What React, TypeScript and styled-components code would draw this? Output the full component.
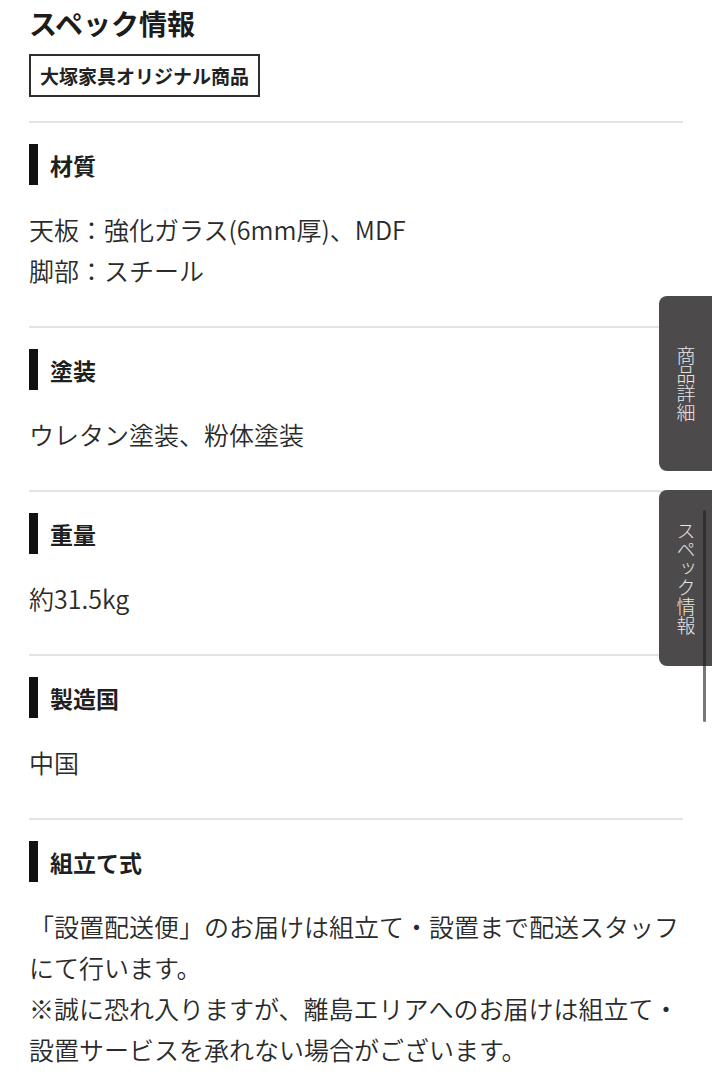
import React from 'react';
import styled, { createGlobalStyle } from 'styled-components';

const GlobalStyle = createGlobalStyle`
    html, body {
        margin: 0;
        padding: 0;
        background: #ffffff;
    }
    body {
        font-family: "Noto Sans CJK JP", "Noto Sans", sans-serif;
        color: #333;
    }
    ::-webkit-scrollbar {
        display: none;
    }
`;

type Spec = {
    label: string;
    lines: string[];
};

const specs: Spec[] = [
    { label: '材質', lines: ['天板：強化ガラス(6mm厚)、MDF', '脚部：スチール'] },
    { label: '塗装', lines: ['ウレタン塗装、粉体塗装'] },
    { label: '重量', lines: ['約31.5kg'] },
    { label: '製造国', lines: ['中国'] },
    {
        label: '組立て式',
        lines: [
            '「設置配送便」のお届けは組立て・設置まで配送スタッフにて行います。',
            '※誠に恐れ入りますが、離島エリアへのお届けは組立て・設置サービスを承れない場合がございます。',
        ],
    },
];

const App = () => {
    return (
        <>
            <GlobalStyle />
            <Page>
                <Header>
                    <Title>スペック情報</Title>
                    <Badge>大塚家具オリジナル商品</Badge>
                </Header>
                {specs.map((spec) => (
                    <Section key={spec.label}>
                        <Heading>
                            <Bar />
                            <HeadingText>{spec.label}</HeadingText>
                        </Heading>
                        <Body>
                            {spec.lines.map((line) => (
                                <Line key={line}>{line}</Line>
                            ))}
                        </Body>
                    </Section>
                ))}
            </Page>
            <SideTabs>
                <Tab $height={175}>
                    <TabLabel>商品詳細</TabLabel>
                </Tab>
                <Tab $height={176}>
                    <TabLabel>スペック情報</TabLabel>
                </Tab>
            </SideTabs>
            <ScrollThumb />
        </>
    );
};
export default App;

const Page = styled.main`
    padding: 4px 29px 0;
`;

const Header = styled.header`
    display: flex;
    flex-direction: column;
    align-items: flex-start;
    gap: 12px;
    padding-bottom: 24px;
`;

const Title = styled.h1`
    margin: 0;
    font-size: 28px;
    line-height: 38px;
    font-weight: 700;
    color: #1c1c1c;
`;

const Badge = styled.div`
    border: 2px solid #2e2e2e;
    padding: 0 9px;
    font-size: 19px;
    line-height: 39px;
    font-weight: 700;
    color: #222;
`;

const Section = styled.section`
    border-top: 2px solid #e4e4e4;
    padding: 21px 0 35px;
`;

const Heading = styled.div`
    display: flex;
    align-items: center;
    gap: 12px;
    height: 41px;
`;

const Bar = styled.span`
    width: 9px;
    height: 41px;
    background: #111;
`;

const HeadingText = styled.h2`
    margin: 0;
    font-size: 23px;
    line-height: 30px;
    font-weight: 700;
    color: #1f1f1f;
`;

const Body = styled.div`
    margin-top: 24px;
`;

const Line = styled.p`
    margin: 0;
    font-size: 25px;
    line-height: 41px;
    font-weight: 350;
    color: #2a2a2a;
`;

const SideTabs = styled.nav`
    position: fixed;
    top: 296px;
    right: 0;
    display: flex;
    flex-direction: column;
    gap: 19px;
`;

const Tab = styled.div<{ $height: number }>`
    width: 53px;
    height: ${(p) => p.$height}px;
    background: #4c4a4a;
    border-radius: 8px 0 0 8px;
    display: flex;
    align-items: center;
    justify-content: center;
`;

const TabLabel = styled.span`
    writing-mode: vertical-rl;
    font-size: 19px;
    line-height: 24px;
    font-weight: 300;
    color: #e6e6e6;
`;

const ScrollThumb = styled.div`
    position: fixed;
    top: 510px;
    right: 6px;
    width: 3px;
    height: 212px;
    border-radius: 2px;
    background: rgba(30, 30, 30, 0.6);
`;
